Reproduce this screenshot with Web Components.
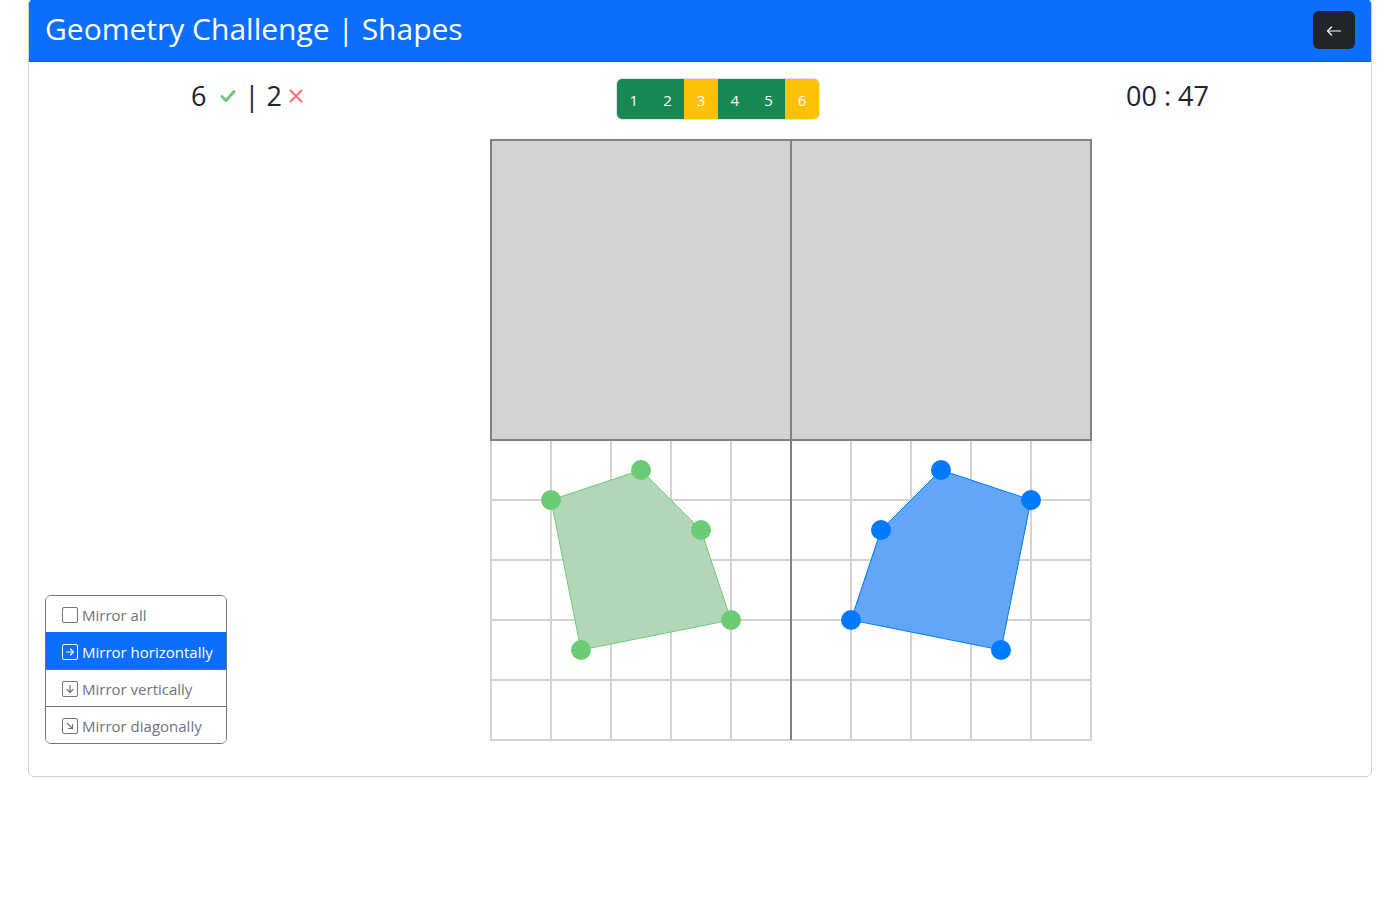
<!DOCTYPE html>
<html lang="en">
<head>
<meta charset="utf-8">
<meta name="viewport" content="width=device-width, initial-scale=1">
<title>Geometry Challenge | Shapes</title>
<style>
  body {
    margin: 0;
    background: #fff;
    color: #212529;
    font: 15px/24px "Open Sans", "Noto Sans", sans-serif;
  }
</style>
</head>
<body>
<challenge-card heading="Geometry Challenge | Shapes">
  <status-row slot="status">
    <score-board right="6" wrong="2"></score-board>
    <round-pager results="ok,ok,part,ok,ok,part"></round-pager>
    <game-timer value="00 : 47"></game-timer>
  </status-row>
  <mirror-menu slot="menu" selected="horizontal"></mirror-menu>
  <shape-board slot="board"></shape-board>
</challenge-card>

<script>
function mount(host, html) {
  host.attachShadow({ mode: 'open' }).innerHTML =
    '<style>:host,*{box-sizing:border-box}</style>' + html;
}

customElements.define('challenge-card', class extends HTMLElement {
  connectedCallback() {
    mount(this, `
      <style>
        :host { display: block; margin: -2px 28px 24px; border: 1px solid #d0d0d1; border-radius: 6px; }
        header {
          display: flex; align-items: center; justify-content: space-between;
          padding: 12px 16px; background: #0d6efd; color: #fff;
          border-bottom: 1px solid #0b5bd1; border-radius: 5px 5px 0 0;
        }
        h1 { margin: 0; padding-bottom: 2px; font-size: 30px; line-height: 36px; font-weight: 400; }
        button {
          width: 42px; height: 38px; padding: 2px 0 0; border: 0; border-radius: 6px;
          background: #212529; color: #fff; display: grid; place-items: center;
        }
        main { padding: 16px; }
        .play { display: flex; align-items: flex-end; margin: 16px 0; }
        .board { flex: 1; min-width: 0; display: flex; justify-content: center; }
      </style>
      <header>
        <h1>${this.getAttribute('heading')}</h1>
        <button type="button" aria-label="Back">
          <svg width="16" height="16" viewBox="0 0 16 16" fill="none" stroke="currentColor" stroke-width="1.200" stroke-linecap="round" stroke-linejoin="round"><path d="M14.500 8H1.500M5.500 4L1.500 8L5.500 12"/></svg>
        </button>
      </header>
      <main>
        <slot name="status"></slot>
        <div class="play">
          <slot name="menu"></slot>
          <div class="board"><slot name="board"></slot></div>
        </div>
      </main>`);
  }
});

customElements.define('status-row', class extends HTMLElement {
  connectedCallback() {
    mount(this, `
      <style>
        :host { display: flex; justify-content: space-between; align-items: center; padding: 0 11%; }
      </style>
      <slot></slot>`);
  }
});

customElements.define('score-board', class extends HTMLElement {
  connectedCallback() {
    mount(this, `
      <style>
        :host { display: flex; align-items: center; font-size: 27px; line-height: 36px; padding: 0 6px 6px 2px; }
        svg { display: block; }
        .ok { margin: 0 8px 0 12px; }
        .no { margin-left: 6px; }
      </style>
      <span>${this.getAttribute('right')}</span>
      <svg class="ok" role="img" aria-label="correct" width="18" height="16" viewBox="0 0 18 16" fill="none" stroke="#6ccb77" stroke-width="3" stroke-linecap="round" stroke-linejoin="round"><path d="M3 8.500L7 12.500L15 3.500"/></svg>
      <span>| ${this.getAttribute('wrong')}</span>
      <svg class="no" role="img" aria-label="wrong" width="16" height="16" viewBox="0 0 16 16" fill="none" stroke="#ff6b6b" stroke-width="1.800" stroke-linecap="round"><path d="M2.500 2.500L13.500 13.500M13.500 2.500L2.500 13.500"/></svg>`);
  }
});

customElements.define('round-pager', class extends HTMLElement {
  connectedCallback() {
    const links = this.getAttribute('results').split(',')
      .map((r, i) => `<a href="#round-${i + 1}" class="${r}">${i + 1}</a>`).join('');
    mount(this, `
      <style>
        :host { display: block; }
        nav {
          display: grid; grid-template-columns: repeat(6, 1fr); width: 204px;
          border: 1px solid #dee2e6; border-radius: 6px; overflow: hidden;
        }
        a { padding: 9px 0 7px; text-align: center; color: #fff; text-decoration: none; }
        .ok { background: #198754; }
        .part { background: #ffc107; }
      </style>
      <nav aria-label="Rounds">${links}</nav>`);
  }
});

customElements.define('game-timer', class extends HTMLElement {
  connectedCallback() {
    mount(this, `
      <style>:host { display: block; font-size: 27px; line-height: 36px; padding: 0 2px 6px 0; }</style>
      <time>${this.getAttribute('value')}</time>`);
  }
});

customElements.define('mirror-menu', class extends HTMLElement {
  connectedCallback() {
    const items = [
      ['all', 'Mirror all', ''],
      ['horizontal', 'Mirror horizontally', 'M4.500 8H11.500M8.500 5L11.500 8L8.500 11'],
      ['vertical', 'Mirror vertically', 'M8 4.500V11.500M5 8.500L8 11.500L11 8.500'],
      ['diagonal', 'Mirror diagonally', 'M5.500 5.500L10.500 10.500M10.500 6.500V10.500H6.500']
    ];
    const selected = this.getAttribute('selected');
    mount(this, `
      <style>
        :host {
          display: block; flex: none; width: 182px; overflow: hidden;
          border: 1px solid #6c757d; border-radius: 6px;
        }
        button {
          display: flex; align-items: center; gap: 4px; width: 100%; height: 37px;
          padding: 2px 12px 0 16px; border: 0; border-bottom: 1px solid #6c757d;
          background: #fff; color: #6c757d; font: inherit; white-space: nowrap;
        }
        button:first-of-type { border-bottom-color: #0d6efd; }
        button:last-of-type { height: 36px; border-bottom: 0; }
        button[aria-pressed="true"] { background: #0d6efd; color: #fff; }
        svg { flex: none; }
      </style>
      ${items.map(([id, label, arrow]) => `<button type="button" aria-pressed="${id === selected}"><svg width="16" height="16" viewBox="0 0 16 16" fill="none" stroke="currentColor" stroke-linecap="round" stroke-linejoin="round"><rect x=".5" y=".5" width="15" height="15" rx="1.500"/><path stroke-width="1.200" d="${arrow}"/></svg>${label}</button>`).join('')}`);
  }
});

customElements.define('shape-board', class extends HTMLElement {
  connectedCallback() {
    const cell = 60, size = 600;
    let grid = '';
    for (let i = 0; i <= 10; i++) grid += `M${i * cell} 300V${size}`;
    for (let j = 5; j <= 10; j++) grid += `M-1 ${j * cell}H${size + 1}`;
    const source = [[60, 360], [150, 330], [210, 390], [240, 480], [90, 510]];
    const mirrored = source.map(([x, y]) => [size - x, y]);
    const shape = (pts, fill, line) =>
      `<polygon points="${pts.join(' ')}" fill="${fill}" stroke="${line}"/>` +
      pts.map(([x, y]) => `<circle cx="${x}" cy="${y}" r="10" fill="${line}"/>`).join('');
    mount(this, `
      <style>
        :host { display: block; max-width: 100%; }
        svg { display: block; width: 602px; max-width: 100%; height: auto; }
      </style>
      <svg viewBox="-1 -4 602 608" role="img" aria-label="Shape and its mirror image">
        <path d="${grid}" stroke="#d3d3d3" stroke-width="2"/>
        <g fill="#d3d3d3" stroke="#808080" stroke-width="2">
          <rect width="300" height="300"/>
          <rect x="300" width="300" height="300"/>
          <path d="M300 300V600"/>
        </g>
        ${shape(source, '#b2d6b7', '#6ccb77')}
        ${shape(mirrored, '#63a6f6', '#007bff')}
      </svg>`);
  }
});
</script>
</body>
</html>
